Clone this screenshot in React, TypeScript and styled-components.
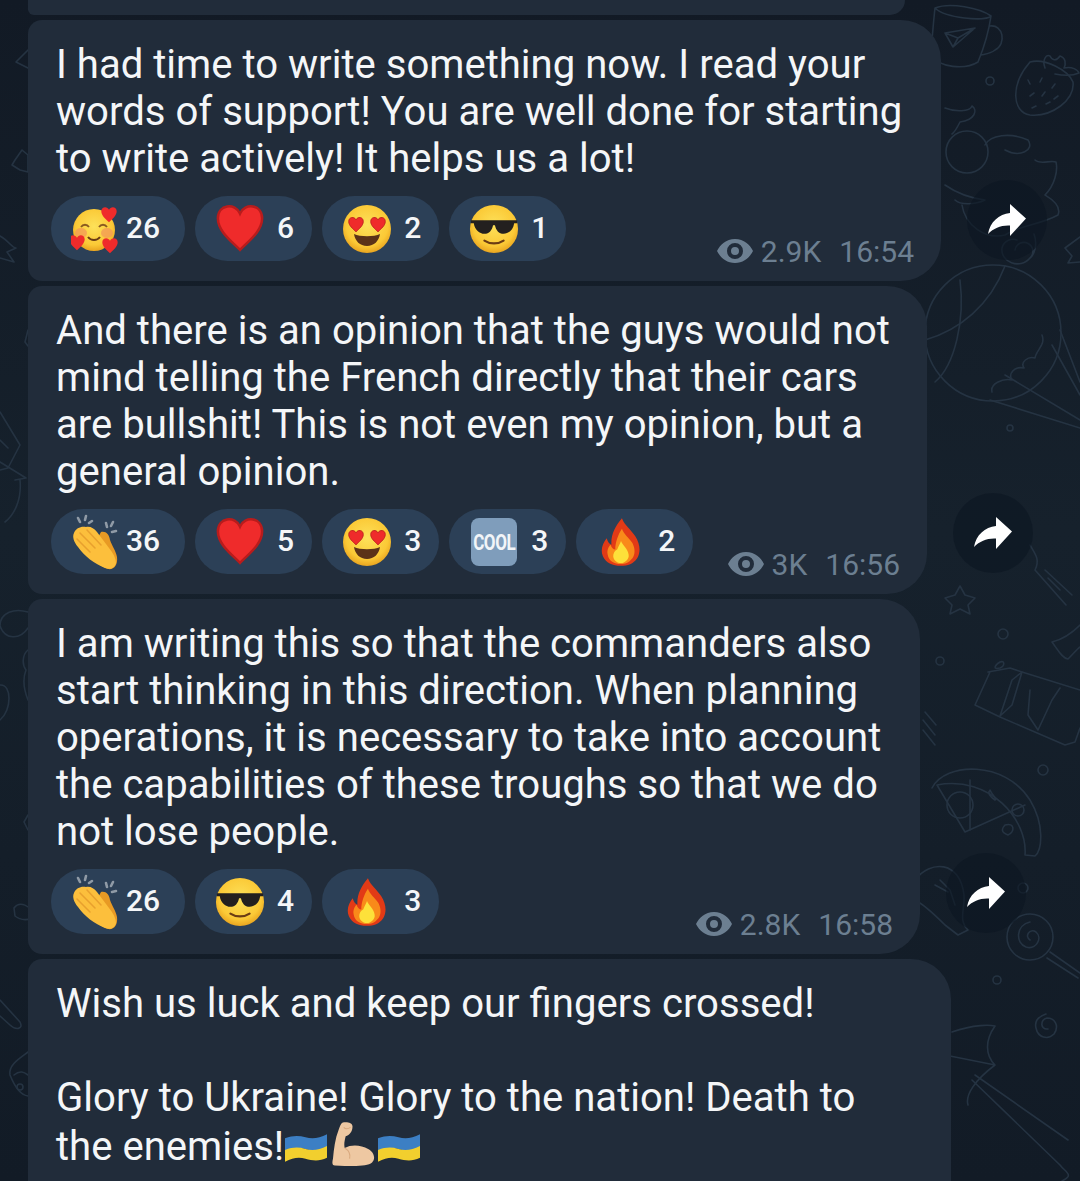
import { FC, ReactNode } from "react";
import styled, { createGlobalStyle } from "styled-components";

const GlobalStyle = createGlobalStyle`
  html, body {
    margin: 0;
    padding: 0;
    height: 1181px;
    overflow: hidden;
    background-color: #141d28;
  }
`;

const Page = styled.div`
  position: relative;
  width: 1080px;
  height: 1181px;
  overflow: hidden;
  background: linear-gradient(180deg, #121a25 0%, #16212c 45%, #121b26 100%);
  font-family: Roboto, "Liberation Sans", sans-serif;
`;

const WallpaperSvg = styled.svg`
  position: absolute;
  top: 0;
  left: 0;
  fill: none;
  stroke: #253342;
  stroke-width: 1.6;
  stroke-linecap: round;
  stroke-linejoin: round;
`;

const Feed = styled.div`
  position: relative;
  display: flex;
  flex-direction: column;
  gap: 5px;
  padding-left: 28px;
`;

const Row = styled.div`
  display: flex;
  align-items: flex-end;
`;

const Bubble = styled.div<{ $width: number }>`
  box-sizing: border-box;
  width: ${(p) => p.$width}px;
  padding: 21px 0 12px;
  border-radius: 14px 40px 40px 14px;
  background-color: #212c3a;
`;

const Sliver = styled.div`
  width: 877px;
  height: 15px;
  border-radius: 0 0 36px 14px;
  background-color: #212c3a;
`;

const LastBubble = styled(Bubble)`
  height: 260px;
  border-radius: 14px 40px 0 0;
`;

const MessageText = styled.div`
  padding: 0 20px 0 28px;
  font-size: 40.1px;
  line-height: 47px;
  color: #f4f6f8;
`;

const LastText = styled(MessageText)`
  padding-right: 60px;
`;

const Footer = styled.div`
  display: flex;
  justify-content: space-between;
  align-items: flex-end;
  margin-top: 14px;
  padding: 0 27px 0 23px;
`;

const Reactions = styled.div`
  display: flex;
  gap: 10px;
  margin-bottom: 8px;
`;

const Pill = styled.div<{ $wide: boolean }>`
  display: flex;
  align-items: center;
  gap: ${(p) => (p.$wide ? 5 : 12)}px;
  height: 65px;
  padding: 0 ${(p) => (p.$wide ? 25 : 18)}px 0 20px;
  border-radius: 33px;
  background-color: #2c4057;
`;

const EmojiSlot = styled.div`
  display: flex;
  justify-content: center;
  align-items: center;
  width: 50px;
  height: 54px;
`;

const Count = styled.span`
  margin-top: -2px;
  font-size: 30px;
  font-weight: 500;
  color: #f4f6f8;
`;

const CoolBadge = styled.div`
  display: flex;
  justify-content: center;
  align-items: center;
  width: 46px;
  height: 48px;
  border-radius: 8px;
  background-color: #7f9dbb;
  color: #f2f5f8;
  font-size: 17px;
  font-weight: 700;
  letter-spacing: -0.4px;
`;

const CoolLabel = styled.span`
  display: inline-block;
  transform: scaleY(1.25);
`;

const Meta = styled.div`
  display: flex;
  align-items: center;
  height: 34px;
  margin-bottom: 1px;
  font-size: 30px;
  color: #6c7f91;
`;

const Views = styled.span`
  margin-left: 8px;
  margin-right: 18px;
`;

const ForwardButton = styled.div`
  display: flex;
  justify-content: center;
  align-items: center;
  width: 80px;
  height: 80px;
  margin: 0 0 21px 26px;
  border-radius: 50%;
  background-color: rgba(11, 21, 33, 0.6);
`;

const FlagSvg = styled.svg`
  display: inline-block;
  vertical-align: -3px;
  margin-left: 1px;
`;

const MuscleSvg = styled.svg`
  display: inline-block;
  vertical-align: -7px;
  margin: 0 2px 0 5px;
`;

const FlagMark: FC = () => (
  <FlagSvg width="42" height="30" viewBox="0 0 43 30">
    <path d="M0 5C8 2 14 2 21 4S35 5 43 1V15C35 19 28 18 21 16S8 15 0 19Z" fill="#3c7fc4" />
    <path d="M0 17C8 14 14 14 21 16S35 17 43 13V25C35 29 28 28 21 26S8 25 0 29Z" fill="#f2cf2e" />
  </FlagSvg>
);

const MuscleMark: FC = () => (
  <MuscleSvg width="43" height="46" viewBox="0 0 44 46">
    <path
      d="M11 1C15 0 21 1 21 5C21 10 18 14 14 15C13 19 12 23 13 27C20 23 30 24 37 28C43 31 45 38 41 42C36 46 24 46 3 45C0 45 0 42 1 38C2 28 3 18 7 8C8 5 9 2 11 1Z"
      fill="#eec8a2"
    />
    <path d="M13 27C18 30 19 34 18 38" stroke="#d9a97f" strokeWidth="1.2" fill="none" />
    <path d="M12 6C14 8 16 8 19 6" stroke="#d9a97f" strokeWidth="1.2" fill="none" />
  </MuscleSvg>
);

const HeartShape: FC<{ x: number; y: number; s: number; edge?: boolean }> = ({ x, y, s, edge }) => (
  <path
    transform={`translate(${x} ${y}) scale(${s})`}
    d="M0 -6C-3 -13 -14 -12 -14 -3C-14 5 -6 11 0 17C6 11 14 5 14 -3C14 -12 3 -13 0 -6Z"
    fill="#ef2b2b"
    stroke={edge ? "#b81c1c" : "none"}
    strokeWidth={edge ? 1.6 : 0}
  />
);

const FaceDefs: FC<{ id: string }> = ({ id }) => (
  <defs>
    <radialGradient id={id} cx="50%" cy="42%" r="58%">
      <stop offset="0%" stopColor="#fde15a" />
      <stop offset="75%" stopColor="#fbc936" />
      <stop offset="100%" stopColor="#e9a520" />
    </radialGradient>
  </defs>
);

const HeartsFace: FC = () => (
  <svg width="52" height="52" viewBox="0 0 50 50">
    <FaceDefs id="hf" />
    <circle cx="23" cy="26" r="21" fill="url(#hf)" />
    <ellipse cx="10" cy="29" rx="6" ry="5" fill="#f2955a" opacity="0.7" />
    <ellipse cx="36" cy="29" rx="6" ry="5" fill="#f2955a" opacity="0.7" />
    <path d="M10 23C12 20 16 20 18 23M28 23C30 20 34 20 36 23" stroke="#8a5a20" strokeWidth="1.8" fill="none" />
    <path d="M17 33C20 37 26 37 29 33" stroke="#6b3c14" strokeWidth="2" fill="none" />
    <HeartShape x={38} y={9} s={0.55} />
    <HeartShape x={6} y={37} s={0.55} />
    <HeartShape x={39} y={40} s={0.55} />
  </svg>
);

const RedHeart: FC = () => (
  <svg width="48" height="50" viewBox="0 0 48 50">
    <HeartShape x={24} y={19} s={1.58} edge />
  </svg>
);

const HeartEyes: FC = () => (
  <svg width="50" height="50" viewBox="0 0 50 50">
    <FaceDefs id="he" />
    <circle cx="25" cy="25" r="24" fill="url(#he)" />
    <HeartShape x={14} y={19} s={0.52} edge />
    <HeartShape x={36} y={19} s={0.52} edge />
    <path d="M12 30C18 33 32 33 38 30C37 37 32 42 25 42S13 37 12 30Z" fill="#5b3218" />
  </svg>
);

const Shades: FC = () => (
  <svg width="52" height="52" viewBox="0 0 52 52">
    <FaceDefs id="sg" />
    <circle cx="26" cy="26" r="25" fill="url(#sg)" />
    <path d="M2 17H50V20L47 20C46 27 41 31 36 31C31 31 28 27 27 22H25C24 27 21 31 16 31C11 31 6 27 5 20L2 20Z" fill="#23201f" />
    <path d="M16 38C22 42 30 42 36 38" stroke="#6b3c14" strokeWidth="2.2" fill="none" strokeLinecap="round" />
  </svg>
);

const ClappingHands: FC = () => (
  <svg width="50" height="56" viewBox="0 0 50 56">
    <path d="M9 8L7 4M14 6L15 2M18 9L21 7M36 13L35 9M40 12L42 8M41 18L45 17" stroke="#8f9aa6" strokeWidth="2.6" strokeLinecap="round" />
    <path d="M30 18C35 17 38 20 39 26C41 32 45 37 46 43C47 51 43 56 37 55C30 53 24 47 18 40Z" fill="#e89a24" />
    <path
      d="M3 19C5 14 10 12 15 13C19 12 23 14 26 18L38 34C42 39 45 44 45 49C44 54 39 56 34 54C24 50 13 42 7 33C3 28 1 23 3 19Z"
      fill="#fcbf3c"
    />
    <path d="M9 19L24 34M6 25L19 38M16 16L30 31" stroke="#e8a02e" strokeWidth="1.5" strokeLinecap="round" fill="none" />
  </svg>
);

const Fire: FC = () => (
  <svg width="40" height="50" viewBox="0 0 42 50">
    <path d="M22 0C25 8 31 11 36 19C41 27 42 35 38 42C34 48 28 50 21 50C12 50 5 47 2 40C-1 33 2 26 6 21C7 25 9 27 11 28C10 18 15 8 22 0Z" fill="#e23a16" />
    <path d="M22 11C24 17 29 20 33 26C36 32 36 38 33 42C29 47 25 48 21 48C14 48 8 45 7 38C6 34 8 30 10 28C11 31 13 33 15 33C15 25 18 17 22 11Z" fill="#f98a1a" />
    <path d="M21 24C23 29 28 32 29 38C30 43 25 47 21 47C16 47 12 43 13 38C14 35 15 34 17 33C18 30 20 27 21 24Z" fill="#fde13a" />
  </svg>
);

const ViewsIcon: FC = () => (
  <svg width="36" height="24" viewBox="0 0 36 24">
    <path fillRule="evenodd" fill="#6c7f91" d="M18 0C27 0 33 6 36 12C33 18 27 24 18 24S3 18 0 12C3 6 9 0 18 0ZM18 4A8 8 0 1 0 18 20A8 8 0 1 0 18 4ZM18 8A4 4 0 1 1 18 16A4 4 0 1 1 18 8Z" />
  </svg>
);

const ForwardIcon: FC = () => (
  <svg width="40" height="34" viewBox="0 0 40 34">
    <path d="M23 1L39 15.5L23 33V22.5C14 22 7 25 1 31C3 19 12 11 23 10Z" fill="#fff" />
  </svg>
);

type Emoji = "hearts" | "heart" | "eyes" | "shades" | "clap" | "cool" | "fire";

const EMOJI: Record<Emoji, ReactNode> = {
  hearts: <HeartsFace />,
  heart: <RedHeart />,
  eyes: <HeartEyes />,
  shades: <Shades />,
  clap: <ClappingHands />,
  cool: (
    <CoolBadge>
      <CoolLabel>COOL</CoolLabel>
    </CoolBadge>
  ),
  fire: <Fire />,
};

interface Reaction {
  emoji: Emoji;
  count: number;
}

interface MessageProps {
  width: number;
  text: string;
  reactions: Reaction[];
  views: string;
  time: string;
}

const Message: FC<MessageProps> = ({ width, text, reactions, views, time }) => (
  <Row>
    <Bubble $width={width}>
      <MessageText>{text}</MessageText>
      <Footer>
        <Reactions>
          {reactions.map((r) => (
            <Pill key={r.emoji} $wide={r.count > 9}>
              <EmojiSlot>{EMOJI[r.emoji]}</EmojiSlot>
              <Count>{r.count}</Count>
            </Pill>
          ))}
        </Reactions>
        <Meta>
          <ViewsIcon />
          <Views>{views}</Views>
          {time}
        </Meta>
      </Footer>
    </Bubble>
    <ForwardButton>
      <ForwardIcon />
    </ForwardButton>
  </Row>
);

const Wallpaper: FC = () => (
  <WallpaperSvg width="1080" height="1181" viewBox="0 0 1080 1181">
    {/* mug and paper plane */}
    <path d="M935 8C950 2 980 8 991 16C985 22 945 18 935 8ZM935 8C933 25 932 45 930 55C940 68 965 70 978 62C985 45 989 30 991 16M990 26C1003 24 1007 44 995 50C990 54 985 54 981 55" />
    <path d="M945 33L975 28L953 47ZM945 33L958 38L975 28M958 38L953 47" />
    {/* strawberry */}
    <path d="M1030 62C1045 58 1068 70 1073 82C1075 100 1052 117 1030 115C1012 112 1010 85 1030 62Z" />
    <path d="M1045 68C1042 60 1046 54 1050 56C1052 60 1056 62 1060 56C1066 58 1066 64 1064 68C1072 66 1078 70 1079 73C1070 77 1060 75 1055 74" />
    <path d="M1028 80L1030 84M1042 78L1040 82M1055 84L1052 88M1030 96L1034 93M1045 92L1042 96M1058 96L1054 99M1032 108L1036 106M1046 104L1050 102" />
    <circle cx="990" cy="81" r="4" />
    {/* bird */}
    <circle cx="967" cy="152" r="21" />
    <path d="M945 108C955 112 970 112 972 106C978 110 975 120 960 122C957 128 955 132 952 134" />
    <path d="M985 145C990 135 1010 132 1028 140C1035 150 1020 158 1005 150" />
    <path d="M945 185C955 192 970 198 985 200C975 205 960 205 955 200M962 205C965 225 985 240 1005 235C1020 225 1040 225 1058 215C1062 205 1050 198 1045 195C1055 185 1058 170 1056 162C1050 160 1040 165 1035 160" />
    <path d="M1015 250A9 9 0 1 1 1030 258C1020 270 1000 262 1002 248C1004 240 1012 238 1017 240M1034 234C1038 245 1034 255 1030 258" />
    <path d="M1065 248L1080 237M1065 248L1072 256L1068 263L1080 262" />
    {/* balloon */}
    <circle cx="993" cy="333" r="68" />
    <path d="M960 280C965 320 955 365 935 382" />
    <path d="M1005 266C990 305 960 330 925 340" />
    <path d="M1042 335C1046 345 1036 350 1035 358C1028 356 1020 362 1024 368C1014 366 1008 374 1012 380C1002 378 990 384 992 392" />
    <path d="M1060 330L1080 382M1052 345L1080 395M1005 375L1080 420M990 400L1080 428" />
    <circle cx="1010" cy="428" r="3" />
    {/* telescope */}
    <path d="M1030 545C1036 555 1040 560 1035 570L1066 605M1045 570L1072 595M1048 578L1060 590" />
    <path d="M960 586L965 595L975 598L968 605L970 614L960 609L950 614L952 605L945 598L955 595Z" />
    <circle cx="1003" cy="634" r="5" />
    <path d="M1080 625C1070 635 1060 640 1052 642C1058 650 1062 658 1068 659C1075 652 1078 648 1080 647" />
    <circle cx="940" cy="661" r="4" />
    {/* chocolate */}
    <path d="M988 672L1010 668L1022 672L1080 690M975 705L990 672M975 705L1000 717L1065 745L1075 742L1080 728" />
    <path d="M1000 716L1012 680L1022 672L1012 705L1000 716M1030 690L1028 715L1038 730L1052 700L1060 688" />
    <path d="M1000 662C995 665 992 670 1000 668C1005 666 1005 660 1000 662Z" />
    <path d="M923 720L935 735M923 730L935 745M925 712L936 725" />
    {/* pizza */}
    <path d="M932 788C945 762 1005 760 1030 800C1045 825 1042 850 1035 856L1025 855C1028 820 990 775 937 785L965 832L1025 805" />
    <path d="M970 780V830" />
    <circle cx="960" cy="805" r="13" />
    <circle cx="1018" cy="810" r="6" />
    <path d="M990 790C992 795 998 800 995 800C988 795 988 792 990 790ZM1005 825C1015 822 1015 832 1008 835C1000 832 1002 828 1005 825Z" />
    <circle cx="1043" cy="770" r="5" />
    <circle cx="1023" cy="888" r="5" />
    {/* bulb */}
    <path d="M915 880C930 860 960 860 964 895C965 910 958 920 968 930L958 935L945 925C935 915 925 905 915 900M935 885L948 892M940 880L950 890L955 905" />
    {/* lollipop */}
    <circle cx="1030" cy="937" r="23" />
    <path d="M1030 940C1024 936 1030 928 1036 932C1043 938 1036 950 1026 947C1015 943 1016 925 1030 922M1050 952L1080 973M1047 958L1078 978" />
    <circle cx="997" cy="980" r="4" />
    <path d="M1048 1029C1040 1030 1040 1020 1047 1018C1054 1018 1060 1025 1054 1034C1048 1040 1038 1038 1036 1028C1034 1020 1040 1016 1046 1014" />
    {/* umbrella */}
    <path d="M952 1032C975 1024 990 1025 995 1026C985 1040 985 1055 995 1065L950 1056M995 1065C975 1080 965 1095 968 1105M972 1080L1060 1165C1065 1172 1075 1175 1062 1181M975 1075L1068 1140" />
    {/* left edge */}
    <path d="M28 50L16 62L28 68M15 160L22 150L28 155V172L20 170L12 165Z" />
    <path d="M0 236C8 240 12 248 16 248L7 252L14 262L0 258" />
    <path d="M28 330L25 342L28 346M0 412L20 445L8 468L0 470M0 440L8 448M0 462L26 478L15 480M20 480C22 500 14 515 5 522" />
    <path d="M28 612C15 608 0 612 0 626C5 640 20 640 28 628M0 685C12 684 12 710 0 720M28 650C22 655 22 665 26 670C22 680 24 690 28 700M28 815L24 822L28 830" />
    <path d="M14 908C20 900 30 906 35 915C30 922 20 920 15 916ZM0 1000L20 1022C24 1030 15 1030 10 1025L0 1016" />
    <path d="M28 1052C20 1058 8 1065 10 1075C14 1085 20 1095 28 1096M14 1075C20 1070 24 1072 28 1075" />
    <circle cx="20" cy="1087" r="3" />
  </WallpaperSvg>
);

const App: FC = () => (
  <Page>
    <GlobalStyle />
    <Wallpaper />
    <Feed>
      <Sliver />
      <Message
        width={913}
        text="I had time to write something now. I read your words of support! You are well done for starting to write actively! It helps us a lot!"
        reactions={[
          { emoji: "hearts", count: 26 },
          { emoji: "heart", count: 6 },
          { emoji: "eyes", count: 2 },
          { emoji: "shades", count: 1 },
        ]}
        views="2.9K"
        time="16:54"
      />
      <Message
        width={899}
        text="And there is an opinion that the guys would not mind telling the French directly that their cars are bullshit! This is not even my opinion, but a general opinion."
        reactions={[
          { emoji: "clap", count: 36 },
          { emoji: "heart", count: 5 },
          { emoji: "eyes", count: 3 },
          { emoji: "cool", count: 3 },
          { emoji: "fire", count: 2 },
        ]}
        views="3K"
        time="16:56"
      />
      <Message
        width={892}
        text="I am writing this so that the commanders also start thinking in this direction. When planning operations, it is necessary to take into account the capabilities of these troughs so that we do not lose people."
        reactions={[
          { emoji: "clap", count: 26 },
          { emoji: "shades", count: 4 },
          { emoji: "fire", count: 3 },
        ]}
        views="2.8K"
        time="16:58"
      />
      <LastBubble $width={923}>
        <LastText>
          Wish us luck and keep our fingers crossed!
          <br />
          <br />
          Glory to Ukraine! Glory to the nation! Death to the enemies!
          <FlagMark />
          <MuscleMark />
          <FlagMark />
        </LastText>
      </LastBubble>
    </Feed>
  </Page>
);

export default App;
